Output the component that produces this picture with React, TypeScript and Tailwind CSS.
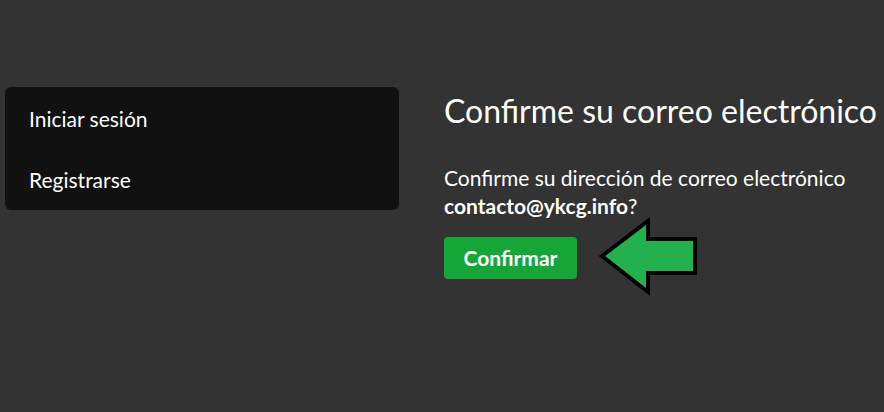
export default function App() {
  return (
    <div
      className="min-h-[412px] w-full bg-[#333333] text-white"
      style={{ fontFamily: 'Lato, "Open Sans", sans-serif' }}
    >
      <div className="flex gap-[45px] pl-[5px] pt-[87px]">
        <nav className="flex h-[123px] w-[394px] flex-col rounded-md bg-[#111111] px-6 pt-[15px] text-[21px]">
          <a className="leading-[34px]">Iniciar sesión</a>
          <a className="mt-[27px] leading-[34px]">Registrarse</a>
        </nav>

        <div className="flex flex-col">
          <h1 className="mt-[2px] text-[32px] leading-[44px]">Confirme su correo electrónico</h1>
          <p className="mt-[31px] text-[21px] leading-[28px]">
            Confirme su dirección de correo electrónico
            <br />
            <b className="font-bold">contacto@ykcg.info</b>?
          </p>
          <div className="-mt-[2px] flex items-center">
            <button className="h-[42px] w-[133px] rounded bg-[#16a637] text-[21px] font-bold">
              Confirmar
            </button>
            <svg width="100" height="80" viewBox="0 0 100 80" className="ml-[22px]">
              <polygon
                points="3,38 49,3 49,21 96,21 96,55 49,55 49,74"
                fill="#22b14c"
                stroke="#000"
                strokeWidth="4"
                strokeLinejoin="miter"
              />
            </svg>
          </div>
        </div>
      </div>
    </div>
  );
}
